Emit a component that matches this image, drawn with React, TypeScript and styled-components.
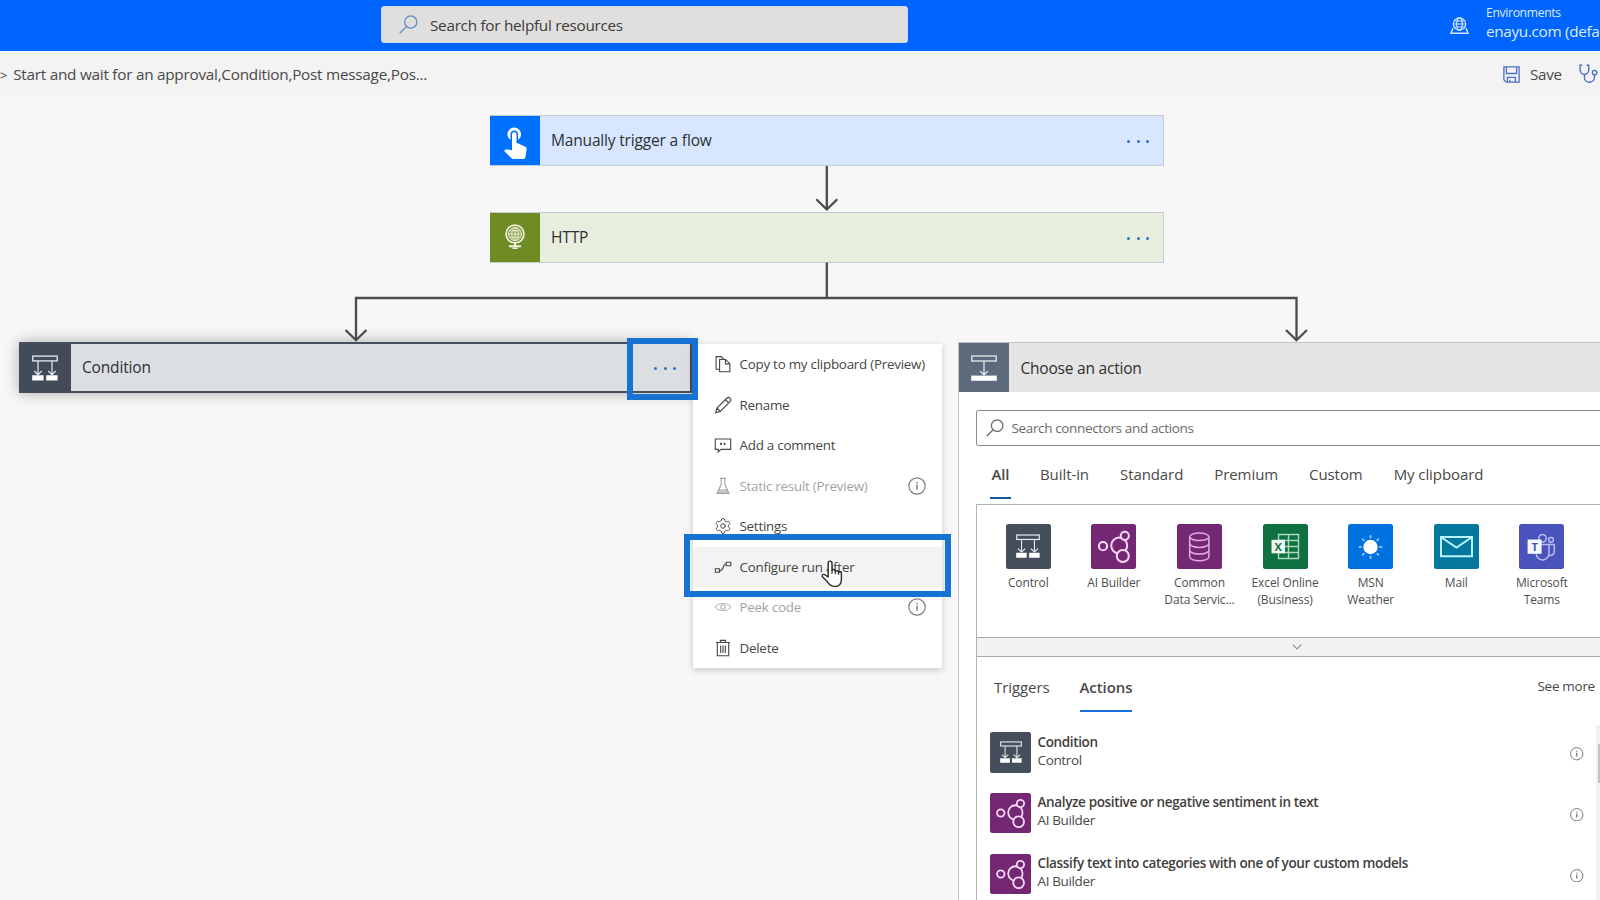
import React from 'react';
import styled, { createGlobalStyle, css } from 'styled-components';
import { MdTouchApp } from 'react-icons/md';
import { Settings } from 'lucide-react';

const GlobalStyle = createGlobalStyle`
  * { box-sizing: border-box; }
  body { margin: 0; overflow: hidden; font-family: "Open Sans", "Noto Sans", sans-serif; color: #323130; }
  svg { display: block; flex: none; }
`;

const Page = styled.div`
  width: 1600px;
  height: 900px;
  overflow: hidden;
  display: flex;
  flex-direction: column;
  background: #f7f7f8;
  white-space: nowrap;
`;

/* ---------- top bars ---------- */

const Header = styled.header`
  height: 51px;
  flex: none;
  display: flex;
  justify-content: space-between;
  background: #0064ff;
`;

const HeaderSearch = styled.div`
  width: 527px;
  height: 37px;
  margin: 6px 0 0 381px;
  padding-left: 17px;
  display: flex;
  align-items: center;
  gap: 12px;
  background: #e1dfdd;
  border: 1px solid #c9dcf5;
  border-radius: 3px;
  font-size: 15.3px;
  letter-spacing: -0.28px;
  color: #3b3a39;
`;

const Environment = styled.div`
  width: 150px;
  display: flex;
  gap: 17px;
  padding-top: 4px;
  color: #dcebff;
`;

const EnvironmentIcon = styled.div`
  padding-top: 13px;
`;

const EnvironmentLabel = styled.div`
  font-size: 12.2px;
  line-height: 18px;
  letter-spacing: -0.35px;
`;

const EnvironmentName = styled.div`
  font-size: 15.3px;
  line-height: 19px;
  letter-spacing: -0.32px;
`;

const CommandBar = styled.div`
  height: 45px;
  flex: none;
  display: flex;
  align-items: center;
  justify-content: space-between;
  background: #f3f3f3;
  border-top: 1px solid #f9fbfe;
  font-size: 15.3px;
  color: #4a4948;
`;

const Breadcrumb = styled.div`
  display: flex;
  gap: 6px;
  padding-top: 2px;
  letter-spacing: -0.25px;
`;

const Chevron = styled.span`
  font-size: 13px;
  line-height: 22px;
`;

const Commands = styled.div`
  display: flex;
  align-items: center;
  width: 97px;
  letter-spacing: -0.35px;
`;

const SaveLabel = styled.span`
  width: 50px;
  margin-left: 10px;
  margin-right: -1px;
`;

/* ---------- flow canvas ---------- */

const Canvas = styled.main`
  position: relative;
  flex: 1;
`;

const Connectors = styled.svg`
  position: absolute;
  left: 0;
  top: 0;
`;

const Node = styled.div<{ $x: number; $y: number; $w: number; $bg: string; $selected?: boolean }>`
  position: absolute;
  left: ${(p) => p.$x}px;
  top: ${(p) => p.$y}px;
  width: ${(p) => p.$w}px;
  height: 51px;
  display: flex;
  align-items: center;
  background: ${(p) => p.$bg};
  border: 1px solid #c3cbd4;
  border-left: 0;
  font-size: 15.5px;
  letter-spacing: -0.17px;
  color: #2b2f36;
  ${(p) =>
    p.$selected &&
    css`
      border: 2.5px solid #454e5a;
      border-left: 0;
      box-shadow: 0 0 14px rgba(0, 0, 0, 0.3);
    `}
`;

const NodeIcon = styled.div<{ $bg: string; $w?: number }>`
  width: ${(p) => p.$w ?? 50}px;
  align-self: stretch;
  display: flex;
  align-items: center;
  justify-content: center;
  background: ${(p) => p.$bg};
  margin-right: 11px;
`;

const NodeTitle = styled.span`
  padding-bottom: 1px;
`;

const NodeDots = styled.div`
  display: flex;
  gap: 6.4px;
  margin: 2px 14px 0 auto;
`;

const Dot = styled.span`
  width: 3px;
  height: 3px;
  border-radius: 50%;
  background: #2f6fc4;
`;

const Highlight = styled.div<{ $x: number; $y: number; $w: number; $h: number }>`
  position: absolute;
  left: ${(p) => p.$x}px;
  top: ${(p) => p.$y}px;
  width: ${(p) => p.$w}px;
  height: ${(p) => p.$h}px;
  border: 6px solid #1673d1;
`;

const Pointer = styled.svg`
  position: absolute;
  left: 821px;
  top: 464px;
`;

/* ---------- context menu ---------- */

const Menu = styled.div`
  position: absolute;
  left: 692.5px;
  top: 247.5px;
  width: 249px;
  padding-top: 0.5px;
  background: #fff;
  box-shadow: 0 2px 7px rgba(0, 0, 0, 0.2);
`;

const MenuItem = styled.div<{ $disabled?: boolean; $active?: boolean }>`
  height: 40.5px;
  display: flex;
  align-items: center;
  padding: 0 15.5px 0 21px;
  font-size: 13.4px;
  letter-spacing: -0.25px;
  color: ${(p) => (p.$disabled ? '#a3a3a3' : '#484644')};
  background: ${(p) => (p.$active ? '#f3f3f3' : 'transparent')};
`;

const MenuLabel = styled.span`
  flex: 1;
  margin-left: 8px;
`;

const MenuInfo = styled.span`
  color: #7d7c7b;
`;

/* ---------- action picker ---------- */

const Picker = styled.section`
  position: absolute;
  left: 958.4px;
  top: 246px;
  width: 680px;
  height: 570px;
  background: #fff;
  border: 1px solid #c0c2c5;
  display: flex;
  flex-direction: column;
`;

const PickerHeader = styled.div`
  height: 49px;
  flex: none;
  display: flex;
  align-items: center;
  background: #e4e4e4;
  font-size: 15.5px;
  letter-spacing: -0.2px;
  color: #2f2f2f;
`;

const PickerSearch = styled.div`
  height: 36.5px;
  flex: none;
  margin: 17.5px 17px 0 16.6px;
  padding-left: 9px;
  display: flex;
  align-items: center;
  gap: 7.5px;
  border: 1.5px solid #8d8c8b;
  border-radius: 2px;
  font-size: 13.5px;
  letter-spacing: -0.36px;
  color: #6b6a69;
`;

const Tabs = styled.div<{ $top: number; $left: number; $gap: number }>`
  display: flex;
  gap: ${(p) => p.$gap}px;
  margin: ${(p) => p.$top}px 0 0 ${(p) => p.$left}px;
  font-size: 15px;
  letter-spacing: -0.08px;
  color: #4a4948;
`;

const Tab = styled.div<{ $active?: boolean; $accent?: string; $narrow?: boolean }>`
  height: 37px;
  line-height: 24px;
  font-weight: ${(p) => (p.$active ? 600 : 400)};
  border-bottom: 2.5px solid ${(p) => (p.$active ? p.$accent : 'transparent')};
  ${(p) =>
    p.$narrow &&
    css`
      width: 20.5px;
      margin-right: -1.7px;
      text-align: center;
    `}
`;

const Results = styled.div`
  flex: 1;
  margin: 5px 17px 0 17.1px;
  border: 1px solid #b3b3b3;
  border-bottom: 0;
  display: flex;
  flex-direction: column;
`;

const ConnectorRow = styled.div`
  height: 132.5px;
  flex: none;
  display: flex;
  padding: 19px 0 0 8px;
`;

const Connector = styled.div`
  width: 85.6px;
  flex: none;
  display: flex;
  flex-direction: column;
  align-items: center;
  text-align: center;
  font-size: 12px;
  line-height: 17px;
  letter-spacing: -0.12px;
  white-space: pre-line;
  color: #4f4e4d;
`;

const Tile = styled.div<{ $bg: string; $size: number }>`
  width: ${(p) => p.$size}px;
  height: ${(p) => p.$size}px;
  flex: none;
  border-radius: 2.5px;
  background: ${(p) => p.$bg};
  display: flex;
  align-items: center;
  justify-content: center;
`;

const ConnectorName = styled.div`
  margin-top: 5.5px;
`;

const Expander = styled.div`
  height: 20px;
  flex: none;
  display: flex;
  align-items: center;
  justify-content: center;
  padding-right: 3px;
  background: #f2f2f2;
  border: solid #a9a9a9;
  border-width: 1px 0;
`;

const ResultsHeader = styled.div`
  display: flex;
  justify-content: space-between;
  padding-right: 24.5px;
`;

const SeeMore = styled.div`
  margin-top: 19px;
  font-size: 13.5px;
  letter-spacing: -0.3px;
  line-height: 20px;
  color: #4a4948;
`;

const ListArea = styled.div`
  display: flex;
  margin-top: 13px;
`;

const List = styled.div`
  width: 618.5px;
  flex: none;
  padding: 7.5px 12px 0 13px;
`;

const Item = styled.div`
  height: 60.8px;
  display: flex;
`;

const ItemText = styled.div`
  flex: 1;
  margin-left: 6.5px;
  font-size: 13.5px;
  line-height: 18px;
  letter-spacing: -0.36px;
  color: #4a4948;
`;

const ItemTitle = styled.div`
  margin-top: 0.5px;
  font-weight: 600;
  color: #3f3e3d;
`;

const ItemInfo = styled.div`
  padding-top: 15px;
  color: #6b6a69;
`;

const ScrollTrack = styled.div`
  width: 14px;
  height: 200px;
  padding: 19px 0 0 2px;
  background: #f1f1f1;
`;

const ScrollThumb = styled.div`
  height: 39px;
  background: #c1c1c1;
`;

/* ---------- icons ---------- */

const SearchIcon = ({ size, color }: { size: number; color: string }) => (
  <svg width={size} height={size} viewBox="0 0 19 19" fill="none" stroke={color} strokeWidth="1.3">
    <circle cx="11.8" cy="7" r="6.1" />
    <path d="M7.5 11.4 .8 18.2" />
  </svg>
);

const InfoIcon = ({ size }: { size: number }) => (
  <svg width={size} height={size} viewBox="0 0 18 18" fill="none" stroke="currentColor" strokeWidth="1.2">
    <circle cx="9" cy="9" r="8.2" />
    <path d="M9 7.8v5" strokeWidth="1.5" />
    <path d="M9 4.9v1.5" strokeWidth="1.5" />
  </svg>
);

const ControlIcon = ({ size }: { size: number }) => (
  <svg width={size} height={size} viewBox="0 0 26 26" fill="none" stroke="#e9ebee" strokeWidth="1.2">
    <rect x=".8" y="1.1" width="24.4" height="4.8" strokeWidth="1.3" />
    <path d="M6 6v13.5M20 6v13.5M2.2 16 6 19.6 9.8 16M16.2 16l3.8 3.6 3.8-3.6" />
    <path d="M.2 20.3h11.4v5.3H.2zM14.2 20.3h11.4v5.3H14.2z" fill="#fff" stroke="none" />
  </svg>
);

const ActionIcon = () => (
  <svg width="26" height="26" viewBox="0 0 26 26" fill="none" stroke="#e9ebee" strokeWidth="1.3">
    <rect x=".8" y="1" width="24.4" height="5" />
    <path d="M13 6v14M9.2 16.3l3.8 3.6 3.8-3.6" />
    <path d="M.2 20.6h25.6v5.2H.2z" fill="#fff" stroke="none" />
  </svg>
);

const GlobeStandIcon = () => (
  <svg width="22" height="26" viewBox="0 0 22 26" fill="none" stroke="#eef2df" strokeWidth="1.1">
    <circle cx="11" cy="10" r="8.9" strokeWidth="1.7" />
    <circle cx="11" cy="10" r="6.6" fill="#cfdab0" fillOpacity=".35" strokeWidth=".9" />
    <ellipse cx="11" cy="10" rx="3.2" ry="6.6" strokeWidth=".9" />
    <path d="M11 3.4v13.2M4.4 10h13.2M5.4 6.8h11.2M5.4 13.2h11.2" strokeWidth=".9" />
    <path d="M11 19v3.6M5 22.2h12" strokeWidth="2" />
    <path d="M8.5 24.2h5" strokeWidth="1.6" />
  </svg>
);

const EnvironmentGlobe = () => (
  <svg width="19" height="18" viewBox="0 0 19 18" fill="none" stroke="#d3e4ff" strokeWidth="1.2">
    <circle cx="9.5" cy="7" r="6.2" />
    <ellipse cx="9.5" cy="7" rx="2.8" ry="6.2" />
    <path d="M3.3 7h12.4M4.3 4h10.4M4.3 10h10.4" />
    <path d="M3 11.2 1 16.2h17l-2-5" strokeWidth="1.5" />
  </svg>
);

const SaveIcon = () => (
  <svg width="17" height="17" viewBox="0 0 17 17" fill="none" stroke="#4a6fc4" strokeWidth="1.3">
    <path d="M.9.9h15.2v15.2H3.2L.9 13.8z" />
    <path d="M3.4.9v6.6h10.2V.9M4.4 16v-4.7h8V16M6.8 16v-2.3" />
  </svg>
);

const StethoscopeIcon = () => (
  <svg width="20" height="20" viewBox="0 0 20 20" fill="none" stroke="#4a6fc4" strokeWidth="1.4">
    <path d="M3.2 1.2H1.1v4.600a4.300 4.600 0 0 0 8.600 0V1.200H7.600" />
    <path d="M5.4 10.400v3.200a5 4.600 0 0 0 10 0v-2.800" />
    <circle cx="15.6" cy="8.600" r="2.200" />
  </svg>
);

const AiBuilderIcon = ({ size }: { size: number }) => (
  <svg width={size} height={size} viewBox="0 0 45 45" fill="#742874" stroke="#f6d9f6" strokeWidth="2">
    <circle cx="12" cy="22.2" r="4.1" />
    <circle cx="28.2" cy="21.6" r="8" />
    <circle cx="33.8" cy="11.8" r="4.1" />
    <circle cx="31.8" cy="32" r="6" />
  </svg>
);

const DatabaseIcon = () => (
  <svg width="45" height="45" viewBox="0 0 45 45" fill="none" stroke="#dcaedd" strokeWidth="1.5">
    <ellipse cx="22.3" cy="12.8" rx="9.6" ry="3.8" />
    <path d="M12.7 12.8v20c0 2.3 4.3 4 9.6 4s9.6-1.7 9.6-4v-20" />
    <path d="M12.7 19.5c0 2.2 4.3 3.9 9.6 3.9s9.6-1.7 9.6-3.9M12.7 26.2c0 2.2 4.3 3.9 9.6 3.9s9.6-1.7 9.6-3.9" />
  </svg>
);

const BadgeLetter = styled.text`
  font: 700 11px 'Open Sans', sans-serif;
  text-anchor: middle;
`;

const ExcelIcon = () => (
  <svg width="45" height="45" viewBox="0 0 45 45" fill="none" stroke="#a9dcbd" strokeWidth="1.4">
    <path d="M15.5 10.5H35.5v24h-20zM15.5 16.5h20M15.5 22.5h20M15.5 28.5h20M25.5 10.5v24" />
    <rect x="8.5" y="15.8" width="13.5" height="13.5" fill="#f0faf4" stroke="none" />
    <BadgeLetter x="15.2" y="26.5" fill="#0f7040" stroke="none">X</BadgeLetter>
  </svg>
);

const SunIcon = () => (
  <svg width="45" height="45" viewBox="0 0 45 45" stroke="#8cc7ff" strokeWidth="1.9" strokeLinecap="round">
    <circle cx="22.5" cy="23" r="7.2" fill="#fff" stroke="none" />
    <path d="M22.5 12v1.5M22.5 32.5V34M11.5 23H13M32 23h1.5M14.7 15.2l1.1 1.1M29.2 29.7l1.1 1.1M30.3 15.2l-1.1 1.1M15.8 29.7l-1.1 1.1" />
  </svg>
);

const MailIcon = () => (
  <svg width="45" height="45" viewBox="0 0 45 45" fill="none" stroke="#b9f3ff" strokeWidth="2">
    <path d="M7 13h31v19.3H7z" />
    <path d="m7.5 13.5 15 10 15-10" />
  </svg>
);

const TeamsIcon = () => (
  <svg width="45" height="45" viewBox="0 0 45 45" fill="none" stroke="#b8bdf0" strokeWidth="1.5">
    <circle cx="23.5" cy="14.2" r="3.8" />
    <circle cx="32" cy="15.8" r="2.4" />
    <path d="M21 20.5h9v8.3a6.3 6.3 0 0 1-12.8 1.4" />
    <path d="M30 20.5h5.3v6.8c0 3-2.300 4.600-5.300 4" />
    <rect x="8.6" y="15.5" width="14" height="14.3" fill="#f7f7ff" stroke="none" />
    <BadgeLetter x="15.6" y="26.6" fill="#4650b8" stroke="none">T</BadgeLetter>
  </svg>
);

const MenuSvg = ({ children }: { children: React.ReactNode }) => (
  <svg width="18" height="18" viewBox="0 0 18 18" fill="none" stroke="currentColor" strokeWidth="1.1">
    {children}
  </svg>
);

const CopyIcon = () => (
  <MenuSvg>
    <path d="M5.2 14.3H2.1V1.6h5.2l2.4 2.4M5.6 4.5h6l4.3 4.2v8H5.6zM11.4 4.7v4.2h4.3" />
  </MenuSvg>
);
const PencilIcon = () => (
  <MenuSvg>
    <path d="M1.6 16.8 3 12 13 2a2 2 0 0 1 2.9 0l.4.4a2 2 0 0 1 0 2.9L6.3 15.4zM11.4 3.6 14.7 7M3 12l3.3 3.4" />
  </MenuSvg>
);
const CommentIcon = () => (
  <MenuSvg>
    <path d="M1.300 3h15.400v10.400H7L4.200 16v-2.600H1.300z" />
    <path d="M7 6.700v2.200M10.600 6.700v2.200" strokeWidth="1.700" />
  </MenuSvg>
);
const FlaskIcon = () => (
  <MenuSvg>
    <path d="M6 1.4h6M7.2 1.6v5.6L3 16.4h12L10.8 7.2V1.6" />
    <path d="M5.2 12h7.6l2 4.2H3.2z" fill="currentColor" fillOpacity=".6" stroke="none" />
  </MenuSvg>
);
const RunAfterIcon = () => (
  <MenuSvg>
    <path d="M1.4 10.8h4v3.4h-4zM12.2 4.2h4.6v3.6h-4.6zM5.6 12.6h1c3.4 0 1.6-6.6 5.4-6.6" />
  </MenuSvg>
);
const EyeIcon = () => (
  <MenuSvg>
    <path d="M1.200 9C4.200 4.400 13.800 4.400 16.800 9c-3 4.600-12.600 4.600-15.600 0z" strokeOpacity=".8" />
    <circle cx="9" cy="9" r="2.200" strokeOpacity=".8" />
  </MenuSvg>
);
const TrashIcon = () => (
  <MenuSvg>
    <path d="M2 3.5h14M6.4 3.3V1.4h5.2v1.9M3.3 3.6v13.2h11.4V3.6M6.7 6.5v7.5M9 6.5v7.5M11.3 6.5v7.5" />
  </MenuSvg>
);

/* ---------- data ---------- */

const menuItems = [
  { label: 'Copy to my clipboard (Preview)', icon: <CopyIcon /> },
  { label: 'Rename', icon: <PencilIcon /> },
  { label: 'Add a comment', icon: <CommentIcon /> },
  { label: 'Static result (Preview)', icon: <FlaskIcon />, disabled: true },
  { label: 'Settings', icon: <Settings size={18} strokeWidth={1.3} /> },
  { label: 'Configure run after', icon: <RunAfterIcon />, active: true },
  { label: 'Peek code', icon: <EyeIcon />, disabled: true },
  { label: 'Delete', icon: <TrashIcon /> },
];

const connectors = [
  { name: 'Control', bg: '#454e5b', icon: <ControlIcon size={24} /> },
  { name: 'AI Builder', bg: '#742874', icon: <AiBuilderIcon size={45} /> },
  { name: 'Common\nData Servic...', bg: '#742874', icon: <DatabaseIcon /> },
  { name: 'Excel Online\n(Business)', bg: '#0f7040', icon: <ExcelIcon /> },
  { name: 'MSN\nWeather', bg: '#0072e0', icon: <SunIcon /> },
  { name: 'Mail', bg: '#03789c', icon: <MailIcon /> },
  { name: 'Microsoft\nTeams', bg: '#4a53bc', icon: <TeamsIcon /> },
];

const actions = [
  { title: 'Condition', source: 'Control' },
  { title: 'Analyze positive or negative sentiment in text', source: 'AI Builder' },
  { title: 'Classify text into categories with one of your custom models', source: 'AI Builder' },
];

const Dots = () => (
  <NodeDots>
    <Dot />
    <Dot />
    <Dot />
  </NodeDots>
);

export default function App() {
  return (
    <Page>
      <GlobalStyle />
      <Header>
        <HeaderSearch>
          <SearchIcon size={19} color="#5b8fc9" />
          Search for helpful resources
        </HeaderSearch>
        <Environment>
          <EnvironmentIcon>
            <EnvironmentGlobe />
          </EnvironmentIcon>
          <div>
            <EnvironmentLabel>Environments</EnvironmentLabel>
            <EnvironmentName>enayu.com (defa</EnvironmentName>
          </div>
        </Environment>
      </Header>
      <CommandBar>
        <Breadcrumb>
          <Chevron>&gt;</Chevron>
          <span>Start and wait for an approval,Condition,Post message,Pos...</span>
        </Breadcrumb>
        <Commands>
          <SaveIcon />
          <SaveLabel>Save</SaveLabel>
          <StethoscopeIcon />
        </Commands>
      </CommandBar>

      <Canvas>
        <Node $x={490} $y={19} $w={674} $bg="#d8e7ff">
          <NodeIcon $bg="#0070ff">
            <MdTouchApp size={36} color="#fff" />
          </NodeIcon>
          <NodeTitle>Manually trigger a flow</NodeTitle>
          <Dots />
        </Node>
        <Node $x={490} $y={115.5} $w={674} $bg="#e8eedd">
          <NodeIcon $bg="#6f8c24">
            <GlobeStandIcon />
          </NodeIcon>
          <NodeTitle>HTTP</NodeTitle>
          <Dots />
        </Node>
        <Node $x={19} $y={246.4} $w={673} $bg="#dcdfe1" $selected>
          <NodeIcon $bg="#434b59" $w={52}>
            <ControlIcon size={26} />
          </NodeIcon>
          <NodeTitle>Condition</NodeTitle>
          <Dots />
        </Node>

        <Picker>
          <PickerHeader>
            <NodeIcon $bg="#5d6a7b">
              <ActionIcon />
            </NodeIcon>
            Choose an action
          </PickerHeader>
          <PickerSearch>
            <SearchIcon size={18} color="#6b6a69" />
            Search connectors and actions
          </PickerSearch>
          <Tabs $top={15.5} $left={30.8} $gap={31}>
            <Tab $active $narrow $accent="#12589e">All</Tab>
            <Tab>Built-in</Tab>
            <Tab>Standard</Tab>
            <Tab>Premium</Tab>
            <Tab>Custom</Tab>
            <Tab>My clipboard</Tab>
          </Tabs>
          <Results>
            <ConnectorRow>
              {connectors.map((c) => (
                <Connector key={c.name}>
                  <Tile $bg={c.bg} $size={45}>{c.icon}</Tile>
                  <ConnectorName>{c.name}</ConnectorName>
                </Connector>
              ))}
            </ConnectorRow>
            <Expander>
              <svg width="10" height="6" viewBox="0 0 10 6" fill="none" stroke="#8a8a8a" strokeWidth="1.1">
                <path d="m.7.7 4.3 4.2L9.3.7" />
              </svg>
            </Expander>
            <ResultsHeader>
              <Tabs $top={17.5} $left={16.5} $gap={30}>
                <Tab>Triggers</Tab>
                <Tab $active $accent="#1a6fe0">Actions</Tab>
              </Tabs>
              <SeeMore>See more</SeeMore>
            </ResultsHeader>
            <ListArea>
              <List>
                {actions.map((a) => (
                  <Item key={a.title}>
                    <Tile $bg={a.source === 'Control' ? '#454e5b' : '#742874'} $size={40.5}>
                      {a.source === 'Control' ? <ControlIcon size={22} /> : <AiBuilderIcon size={40.5} />}
                    </Tile>
                    <ItemText>
                      <ItemTitle>{a.title}</ItemTitle>
                      {a.source}
                    </ItemText>
                    <ItemInfo>
                      <InfoIcon size={13.5} />
                    </ItemInfo>
                  </Item>
                ))}
              </List>
              <ScrollTrack>
                <ScrollThumb />
              </ScrollTrack>
            </ListArea>
          </Results>
        </Picker>

        <Connectors width="1600" height="260" viewBox="0 0 1600 260" fill="none" stroke="#4a4b4c" strokeWidth="2.3">
          <path d="M826.8 70v43M816.3 103.300l10.500 10.200 10.500-10.200" />
          <path d="M826.8 166.500v35.500M356 244v-42h940.500v42" />
          <path d="M345.5 234l10.500 10.200 10.500-10.200M1286 234l10.500 10.200 10.500-10.200" />
        </Connectors>

        <Menu>
          {menuItems.map((m) => (
            <MenuItem key={m.label} $disabled={m.disabled} $active={m.active}>
              {m.icon}
              <MenuLabel>{m.label}</MenuLabel>
              {m.disabled && (
                <MenuInfo>
                  <InfoIcon size={18} />
                </MenuInfo>
              )}
            </MenuItem>
          ))}
        </Menu>

        <Highlight $x={627} $y={242} $w={71} $h={62} />
        <Highlight $x={684} $y={438} $w={266.5} $h={63} />
        <Pointer width="22" height="28" viewBox="0 0 22 28" fill="#fff" stroke="#2d2d2d" strokeWidth="1.4" strokeLinejoin="round">
          <path d="M7.2 17V3a1.9 1.9 0 0 1 3.8 0v7.6a1.7 1.7 0 0 1 3.3.3v.8a1.7 1.7 0 0 1 3.2.4v.8a1.5 1.5 0 0 1 2.9.5v6c0 4.4-2.6 7-6.8 7-3.8 0-5.6-1.9-7.4-4.8L1.5 16.7c-.9-1.7.9-3 2.4-1.9z" />
          <path d="M11 10.5v3.5M14.3 11.5v2.8M17.5 12.8v2" strokeWidth="1.1" />
        </Pointer>
      </Canvas>
    </Page>
  );
}
